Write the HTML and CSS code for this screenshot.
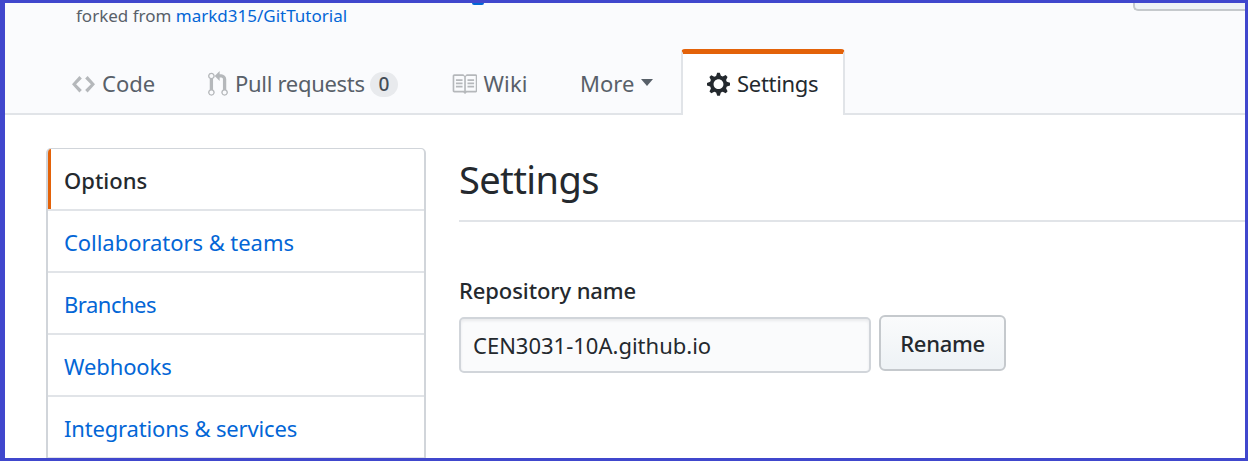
FILE: index.html
```html
<!DOCTYPE html>
<html lang="en">
<head>
<meta charset="utf-8">
<title>Settings</title>
<link rel="stylesheet" href="styles.css">
</head>
<body>
<div class="frame">
  <header class="header">
    <div class="title-row">
      <span class="title-descender"></span>
      <span class="header-button"></span>
    </div>
    <p class="fork">forked from <a class="link" href="#">markd315/GitTutorial</a></p>
    <nav class="tabs">
      <a class="tab tab-code"><svg class="icon" width="23" height="26.4" viewBox="0 0 14 16"><path d="M9.5 3L8 4.5 11.5 8 8 11.5 9.5 13 14 8 9.5 3zm-5 0L0 8l4.5 5L6 11.5 2.5 8 6 4.5 4.5 3z"/></svg><span class="code-text">Code</span></a>
      <a class="tab tab-pulls"><svg class="icon" width="20" height="26.4" viewBox="0 0 12 16"><path d="M11 11.28V5c-.03-.78-.34-1.47-.94-2.06C9.46 2.35 8.78 2.03 8 2H7V0L4 3l3 3V4h1c.27.02.48.11.69.31.21.2.3.42.31.69v6.28A1.993 1.993 0 0 0 10 15a1.993 1.993 0 0 0 1-3.72zm-1 2.92c-.66 0-1.2-.55-1.2-1.2 0-.65.55-1.2 1.2-1.2.65 0 1.2.55 1.2 1.2 0 .65-.55 1.2-1.2 1.2zM4 3c0-1.11-.89-2-2-2a1.993 1.993 0 0 0-1 3.72v6.56A1.993 1.993 0 0 0 2 15a1.993 1.993 0 0 0 1-3.72V4.72c.59-.34 1-.98 1-1.72zm-.8 10c0 .66-.55 1.2-1.2 1.2-.65 0-1.2-.55-1.2-1.2 0-.65.55-1.2 1.2-1.2.65 0 1.2.55 1.2 1.2zM2 4.2C1.34 4.2.8 3.65.8 3c0-.65.55-1.2 1.2-1.2.65 0 1.2.55 1.2 1.2 0 .65-.55 1.2-1.2 1.2z"/></svg><span class="pulls-text">Pull requests</span><span class="counter">0</span></a>
      <a class="tab tab-wiki"><svg class="icon" width="26.4" height="26.4" viewBox="0 0 16 16"><path d="M3 5h4v1H3V5zm0 3h4V7H3v1zm0 2h4V9H3v1zm11-5h-4v1h4V5zm0 2h-4v1h4V7zm0 2h-4v1h4V9zm2-6v9c0 .55-.45 1-1 1H9.5l-1 1-1-1H2c-.55 0-1-.45-1-1V3c0-.55.45-1 1-1h5.5l1 1 1-1H15c.55 0 1 .45 1 1zm-8 .5L7.5 3H2v9h6V3.5zm7-.5H9.5l-.5.5V12h6V3z"/></svg><span class="wiki-text">Wiki</span></a>
      <a class="tab tab-more"><span class="more-text">More</span><span class="caret"></span></a>
      <a class="tab tab-settings"><svg class="icon" width="23" height="26.4" viewBox="0 0 14 16"><path d="M14 8.77v-1.6l-1.94-.64-.45-1.09.88-1.84-1.13-1.13-1.81.91-1.09-.45-.69-1.92h-1.6l-.63 1.94-1.11.45-1.84-.88-1.13 1.13.91 1.81-.45 1.09L0 7.23v1.59l1.94.64.45 1.09-.88 1.84 1.13 1.13 1.81-.91 1.09.45.69 1.92h1.59l.63-1.94 1.11-.45 1.84.88 1.13-1.13-.92-1.81.47-1.09L14 8.75v.02zM7 11c-1.66 0-3-1.34-3-3s1.34-3 3-3 3 1.34 3 3-1.34 3-3 3z"/></svg><span class="settings-text">Settings</span></a>
    </nav>
  </header>
  <div class="content">
    <nav class="menu">
      <a class="menu-item selected"><span class="m-options">Options</span></a>
      <a class="menu-item"><span class="m-collab">Collaborators &amp; teams</span></a>
      <a class="menu-item"><span class="m-branches">Branches</span></a>
      <a class="menu-item"><span class="m-webhooks">Webhooks</span></a>
      <a class="menu-item"><span class="m-integrations">Integrations &amp; services</span></a>
    </nav>
    <main class="main">
      <h1 class="heading">Settings</h1>
      <label class="label" for="repo">Repository name</label>
      <div class="form-row">
        <input class="input" id="repo" type="text" value="CEN3031-10A.github.io">
        <button class="button" type="button">Rename</button>
      </div>
    </main>
  </div>
</div>
</body>
</html>
```
FILE: styles.css
```css
* { box-sizing: border-box; }
body { margin: 0; font-family: "Noto Sans", "Open Sans", sans-serif; font-size: 22px; color: #24292e; background: #fff; }
.frame { width: 1248px; height: 461px; overflow: hidden; border: solid #4047cd; border-width: 3px 3px 3px 5px; }
.header { height: 112px; background: #fafbfd; border-bottom: 2px solid #e1e4e8; display: flex; flex-direction: column; }
.title-row { height: 8px; flex: none; display: flex; justify-content: space-between; align-items: flex-start; padding-left: 467px; }
.title-descender { width: 12px; height: 2px; background: #0366d6; border-radius: 0 0 6px 6px; }
.header-button { width: 112px; height: 8px; background: #eff3f6; border: solid #c5c9cc; border-width: 0 0 2px 2px; border-radius: 0 0 0 5px; }
.fork { margin: -8px 0 0 71px; height: 26px; line-height: 26px; font-size: 17px; color: #586069; flex: none; width: 400px; }
.link { color: #0366d6; text-decoration: none; }
.tabs { margin-top: 20px; height: 66px; flex: none; display: flex; }
.tab { display: flex; align-items: center; height: 66px; padding-top: 5px; color: #586069; white-space: nowrap; }
.code-text, .pulls-text, .wiki-text, .more-text, .settings-text { margin-top: -3px; }
.icon { fill: #b5b8bb; flex: none; display: block; }
.tab-code { margin-left: 67px; width: 136px; gap: 7px; }
.tab-pulls { width: 243px; gap: 7px; }
.pulls-text { width: 128px; letter-spacing: -0.3px; }
.counter { width: 28px; height: 25px; border-radius: 13px; background: #e8eaed; color: #444d56; font-size: 19px; font-weight: 500; line-height: 25px; text-align: center; }
.tab-wiki { width: 129px; gap: 6px; }
.wiki-text { letter-spacing: 0.2px; }
.tab-more { width: 101px; }
.more-text { width: 61px; }
.caret { border: solid transparent; border-width: 7px 6.5px 0; border-top-color: #586069; margin-top: -4px; }
.tab-settings { width: 164px; border: 2px solid #e1e4e8; border-top: 5px solid #e36209; border-bottom: 0; border-radius: 4px 4px 0 0; background: #fff; color: #24292e; padding: 0 0 0 24px; gap: 7px; }
.settings-text { letter-spacing: -0.3px; }
.tab-settings .icon { fill: #24292e; }
.content { display: flex; align-items: flex-start; padding: 33px 0 0 41px; }
.menu { width: 380px; border: 2px solid #d1d5da; border-top-width: 1px; border-radius: 5px 5px 0 0; flex: none; overflow: hidden; }
.menu-item { display: flex; align-items: center; height: 62px; padding: 2px 0 0 16px; border-bottom: 2px solid #e1e4e8; color: #0366d6; white-space: nowrap; }
.m-collab { letter-spacing: -0.05px; }
.m-branches { letter-spacing: -0.5px; }
.m-webhooks { letter-spacing: -0.1px; }
.m-integrations { letter-spacing: -0.17px; }
.selected { color: #24292e; font-weight: 500; background: linear-gradient(#e36209, #e36209) 0 0 / 3px 100% no-repeat border-box; }
.main { margin-left: 33px; flex: 1; }
.heading { margin: 0; height: 74px; border-bottom: 2px solid #e1e4e8; font-size: 38px; line-height: 63px; font-weight: 400; letter-spacing: -0.6px; }
.label { display: block; margin-top: 52px; height: 43px; line-height: 32px; font-weight: 500; letter-spacing: -0.1px; }
.form-row { display: flex; align-items: flex-start; gap: 8px; }
.input { width: 412px; height: 56px; margin: 0; border: 2px solid #d1d5da; border-radius: 5px; background: #fafbfc; box-shadow: inset 0 2px 3px rgba(27,31,35,.075); padding: 0 12px; font: inherit; color: #24292e; }
.button { width: 127px; height: 56px; margin-top: -2px; border: 2px solid #c5c9cd; border-radius: 6px; background: linear-gradient(#fafbfc, #eff3f6 90%); font: inherit; font-weight: 500; letter-spacing: -0.3px; color: #24292e; padding: 0; }
```
